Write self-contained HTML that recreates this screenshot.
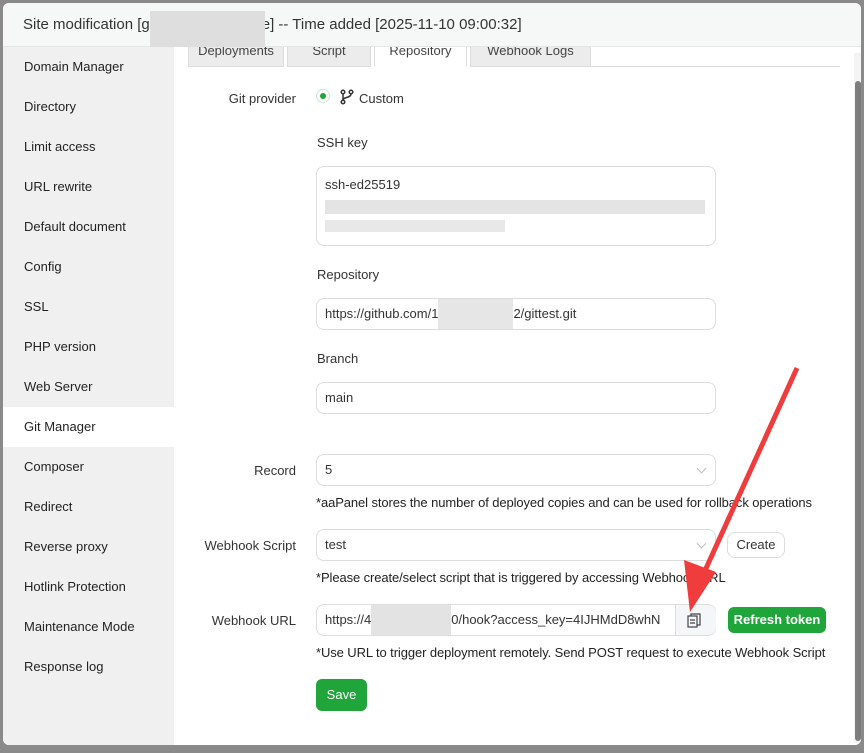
<!DOCTYPE html>
<html><head><style>
body{margin:0;width:864px;height:753px;background:#8a8a8a;overflow:hidden;font-family:"Liberation Sans",sans-serif;position:relative}
.frame{position:absolute;left:3px;top:3px;width:858px;height:742px;background:#fff;border-radius:6px;overflow:hidden}
.hdr{position:absolute;left:0;top:0;width:858px;height:44px;background:#f6f8f8;border-bottom:1px solid #e6e6e6;font-size:15px;color:#333;line-height:44px;padding-left:20px;box-sizing:border-box;z-index:2}
.blur{position:absolute;left:147px;top:8px;width:115px;height:36px;background:#dedede}
.side{position:absolute;left:0;top:45px;width:171px;height:700px;background:#f0f0f0}
.side div{height:40px;line-height:40px;padding-left:21px;font-size:13px;color:#222}
.side .act{background:#fff}
.c{position:absolute;font-size:13px;color:#333}
.lbl{position:absolute;font-size:13px;color:#333;text-align:right;width:120px}
.inp{position:absolute;border:1px solid #ddd;border-radius:8px;box-sizing:border-box;font-size:13px;color:#333;padding-left:8px;background:#fff}
.tab{position:absolute;top:32px;height:32px;border:1px solid #ddd;background:#ececec;font-size:13px;color:#444;text-align:center;line-height:30px;box-sizing:border-box}
.chev{position:absolute;right:10px;top:50%;width:6px;height:6px;border-right:1px solid #bbb;border-bottom:1px solid #bbb;transform:translateY(-70%) rotate(45deg)}
.btn{position:absolute;background:#20a53a;color:#fff;font-size:13px;font-weight:bold;border-radius:6px;text-align:center}
.note{position:absolute;font-size:13px;color:#222;letter-spacing:-0.1px}
</style></head><body>
<div class="frame">
<div class="hdr">Site modification [g<span style="display:inline-block;width:112px"></span>e] -- Time added [2025-11-10 09:00:32]<div class="blur"></div></div>
<div class="side" style="top:44px">
<div>Domain Manager</div><div>Directory</div><div>Limit access</div><div>URL rewrite</div><div>Default document</div><div>Config</div><div>SSL</div><div>PHP version</div><div>Web Server</div><div class="act">Git Manager</div><div>Composer</div><div>Redirect</div><div>Reverse proxy</div><div>Hotlink Protection</div><div>Maintenance Mode</div><div>Response log</div>
</div>
<div class="tab" style="left:185px;width:96px">Deployments</div>
<div class="tab" style="left:284px;width:84px">Script</div>
<div class="tab" style="left:371px;width:93px;background:#fff;border-bottom-color:#fff">Repository</div>
<div class="tab" style="left:467px;width:121px">Webhook Logs</div>
<div style="position:absolute;left:588px;top:63px;width:249px;height:1px;background:#ddd"></div>
<div style="position:absolute;left:851px;top:50px;width:7px;height:690px;background:#f4f4f4"></div>
<div style="position:absolute;left:852px;top:78px;width:6px;height:660px;background:#7d7d7d;border-radius:3px"></div>

<div class="lbl" style="left:173px;top:88px">Git provider</div>
<div style="position:absolute;left:313px;top:86px;width:14px;height:14px;border-radius:50%;border:1px solid #cfe8d4;box-sizing:border-box"><div style="margin:3px;width:6px;height:6px;border-radius:50%;background:#20a53a"></div></div>
<svg style="position:absolute;left:337px;top:86px" width="14" height="16" viewBox="0 0 14 16" fill="none" stroke="#333" stroke-width="1.5"><circle cx="3" cy="3" r="1.8"/><circle cx="3" cy="13" r="1.8"/><circle cx="11" cy="3" r="1.8"/><path d="M3 5v6M11 5c0 4-8 3-8 6"/></svg>
<div class="c" style="left:356px;top:88px">Custom</div>

<div class="c" style="left:314px;top:132px">SSH key</div>
<div class="inp" style="left:313px;top:163px;width:400px;height:80px;padding-top:10px">ssh-ed25519
<div style="margin-top:8px;width:380px;height:14px;background:#e4e4e4"></div>
<div style="margin-top:6px;width:180px;height:12px;background:#e8e8e8"></div></div>

<div class="c" style="left:314px;top:264px">Repository</div>
<div class="inp" style="left:313px;top:295px;width:400px;height:32px;line-height:30px">https://github.com/1<span style="display:inline-block;width:75px;height:30px;background:#e6e6e6;vertical-align:top"></span>2/gittest.git</div>

<div class="c" style="left:314px;top:348px">Branch</div>
<div class="inp" style="left:313px;top:379px;width:400px;height:32px;line-height:30px">main</div>

<div class="lbl" style="left:173px;top:460px">Record</div>
<div class="inp" style="left:313px;top:451px;width:400px;height:32px;line-height:30px">5<div class="chev"></div></div>
<div class="note" style="left:313px;top:492px">*aaPanel stores the number of deployed copies and can be used for rollback operations</div>

<div class="lbl" style="left:173px;top:535px">Webhook Script</div>
<div class="inp" style="left:313px;top:526px;width:400px;height:32px;line-height:30px">test<div class="chev"></div></div>
<div class="inp" style="left:724px;top:529px;width:58px;height:26px;line-height:24px;padding-left:0;text-align:center">Create</div>
<div class="note" style="left:313px;top:567px">*Please create/select script that is triggered by accessing Webhook URL</div>

<div class="lbl" style="left:173px;top:610px">Webhook URL</div>
<div class="inp" style="left:313px;top:601px;width:400px;height:32px;line-height:30px;overflow:hidden;white-space:nowrap">https://4<span style="display:inline-block;width:80px;height:30px;background:#e3e3e3;vertical-align:top"></span>0/hook?access_key=4IJHMdD8whN</div>
<div style="position:absolute;left:672px;top:602px;width:40px;height:30px;background:#f4f6f8;border-left:1px solid #ddd;border-radius:0 8px 8px 0"></div>
<svg style="position:absolute;left:684px;top:610px" width="14" height="15" viewBox="0 0 14 15" fill="none" stroke="#444" stroke-width="1.2"><rect x="1" y="3" width="9" height="11"/><path d="M4 3V1h9v11h-3M3 7h5M3 10h5"/></svg>
<div class="btn" style="left:725px;top:604px;width:98px;height:26px;line-height:26px">Refresh token</div>
<div class="note" style="left:313px;top:642px">*Use URL to trigger deployment remotely. Send POST request to execute Webhook Script</div>
<div class="btn" style="left:313px;top:676px;width:51px;height:32px;line-height:32px;font-weight:normal">Save</div>
</div>
<svg style="position:absolute;left:0;top:0" width="864" height="753"><path d="M797 368 L703 575" stroke="#f03c3c" stroke-width="5"/><path d="M690 612 L684 560 L716 572 Z" fill="#f03c3c"/></svg>
</body></html>
